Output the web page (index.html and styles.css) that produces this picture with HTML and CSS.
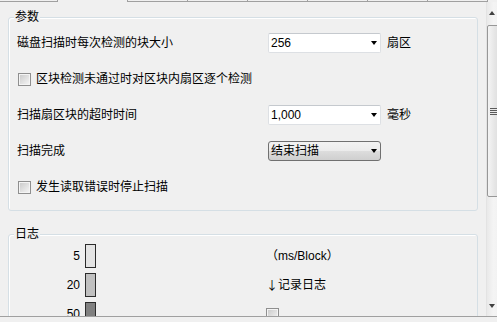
FILE: index.html
```html
<!DOCTYPE html>
<html lang="zh-CN">
<head>
    <meta charset="UTF-8">
    <meta name="viewport" content="width=device-width, initial-scale=1.0">
    <title>扫描设置</title>
    <link rel="stylesheet" href="styles.css">
</head>
<body>

<div class="tabs">
    <span class="tab tab-first"></span>
    <span class="tab tab-active"></span>
    <span class="tab"></span>
    <span class="tab"></span>
    <span class="tab"></span>
    <span class="tab"></span>
    <span class="tab"></span>
    <span class="tab"></span>
</div>

<div class="view">
    <div class="content">
        <div class="group">
            <span class="group-title">参数</span>
            <div class="params">
                <label class="label">磁盘扫描时每次检测的块大小</label>
                <div class="combo"><span>256</span><i class="arrow-down"></i></div>
                <span class="unit">扇区</span>

                <label class="check-row"><span class="checkbox"></span>区块检测未通过时对区块内扇区逐个检测</label>

                <label class="label">扫描扇区块的超时时间</label>
                <div class="combo"><span>1,000</span><i class="arrow-down"></i></div>
                <span class="unit">毫秒</span>

                <label class="label">扫描完成</label>
                <div class="combo combo-list"><span>结束扫描</span><i class="arrow-down"></i></div>
                <span class="unit"></span>

                <label class="check-row"><span class="checkbox"></span>发生读取错误时停止扫描</label>
            </div>
        </div>

        <div class="group group-log">
            <span class="group-title">日志</span>
            <div class="log">
                <div class="log-row">
                    <span class="log-value">5</span>
                    <span class="log-bar bar-light"></span>
                    <span class="log-note">（ms/Block）</span>
                </div>
                <div class="log-row">
                    <span class="log-value">20</span>
                    <span class="log-bar bar-mid"></span>
                    <span class="log-note"><span class="cjk">↓</span>记录日志</span>
                </div>
                <div class="log-row">
                    <span class="log-value">50</span>
                    <span class="log-bar bar-dark"></span>
                    <span class="log-note"><span class="checkbox"></span></span>
                </div>
            </div>
        </div>
    </div>

    <div class="scrollbar">
        <div class="sb-btn sb-up"><i class="arrow-up"></i></div>
        <div class="sb-thumb">
            <span class="grip"></span>
        </div>
        <div class="sb-track"></div>
        <div class="sb-btn sb-down"><i class="arrow-down dark"></i></div>
    </div>
</div>

</body>
</html>
```

FILE: styles.css
```css
body {
    margin: 0;
    width: 497px;
    height: 322px;
    overflow: hidden;
    background-color: #f0f0f0;
    color: #000;
    font-family: "Liberation Sans", "Noto Sans CJK SC", sans-serif;
    font-size: 12px;
    line-height: 14px;
}
.cjk {
    font-family: "Noto Sans CJK SC", sans-serif;
}
.tabs {
    display: flex;
    height: 2px;
}
.tab {
    flex: none;
    width: 59px;
    height: 1px;
    border-bottom: 1px solid #a0a0a0;
    border-right: 1px solid #a0a0a0;
}
.tab-first {
    width: 57px;
}
.tab-active {
    width: 69px;
    height: 2px;
    border-bottom: none;
}
.view {
    display: flex;
    height: 314px;
    border-bottom: 1px solid #a0a0a0;
    overflow: hidden;
}
.content {
    flex: none;
    width: 486px;
    overflow: hidden;
}
.group {
    position: relative;
    margin: 15px 8px 0 8px;
    border: 1px solid #d5dfe5;
    border-radius: 3px;
    box-shadow: inset 1px 1px 0 #fff;
}
.group-title {
    position: absolute;
    top: -8px;
    left: 5px;
    padding: 0 1px;
    background-color: #f0f0f0;
}
.group-log {
    margin-top: 23px;
    height: 120px;
}
.params {
    display: grid;
    grid-template-columns: 251px 113px auto;
    grid-auto-rows: 20px;
    row-gap: 16px;
    align-items: center;
    padding: 15px 0 13px 8px;
}
.check-row {
    grid-column: 1 / -1;
    display: flex;
    align-items: center;
    gap: 5px;
    margin-left: 1px;
}
.checkbox {
    display: inline-block;
    width: 11px;
    height: 11px;
    border: 1px solid #8f8f8f;
    box-shadow: inset 0 0 0 1px #f4f4f4;
    background: linear-gradient(135deg, #c8c8c8, #f7f7f7);
}
.combo {
    box-sizing: border-box;
    height: 20px;
    display: flex;
    align-items: center;
    justify-content: space-between;
    padding: 0 3px 0 2px;
    background-color: #fff;
    border: 1px solid #dde0e4;
    border-top-color: #c5c9ce;
    border-radius: 2px;
}
.combo-list {
    border: 1px solid #707070;
    border-radius: 3px;
    background: linear-gradient(#f2f2f2, #ebebeb 50%, #dddddd 51%, #cfcfcf);
}
.unit {
    margin-left: 6px;
}
.arrow-down {
    width: 0;
    height: 0;
    border-left: 3.5px solid transparent;
    border-right: 3.5px solid transparent;
    border-top: 4px solid #000;
}
.arrow-up {
    width: 0;
    height: 0;
    border-left: 3.5px solid transparent;
    border-right: 3.5px solid transparent;
    border-bottom: 4px solid #404040;
}
.arrow-down.dark {
    border-top-color: #404040;
}
.log {
    padding-top: 9px;
}
.log-row {
    display: flex;
    align-items: center;
    height: 24px;
    margin-bottom: 5px;
}
.log-value {
    width: 71px;
    text-align: right;
}
.log-bar {
    box-sizing: border-box;
    width: 11px;
    height: 24px;
    margin-left: 5px;
    border: 1px solid #2b2b2b;
}
.bar-light {
    background-color: #e4e4e4;
}
.bar-mid {
    background-color: #c0c0c0;
}
.bar-dark {
    background-color: #808080;
}
.log-note {
    display: flex;
    align-items: center;
    margin-left: 170px;
}
.scrollbar {
    flex: none;
    width: 16px;
    display: flex;
    flex-direction: column;
    border-left: 1px solid #e3e3e3;
    background: linear-gradient(to right, #e9e9e9, #f4f4f4 40%, #f0f0f0);
}
.sb-btn {
    display: flex;
    align-items: center;
    justify-content: center;
    flex: none;
}
.sb-up {
    height: 22px;
    padding-right: 6px;
}
.sb-down {
    height: 20px;
    padding-right: 6px;
}
.sb-thumb {
    flex: none;
    box-sizing: border-box;
    height: 172px;
    margin-top: 1px;
    display: flex;
    align-items: center;
    border: 1px solid #979797;
    border-radius: 2px;
    background: linear-gradient(to right, #f4f4f4, #e6e6e6 45%, #d9d9d9);
}
.grip {
    width: 8px;
    height: 7px;
    margin-left: 2px;
    background: repeating-linear-gradient(#5a5a5a 0 1px, #e8e8e8 1px 2px);
}
.sb-track {
    flex: 1;
}
```
